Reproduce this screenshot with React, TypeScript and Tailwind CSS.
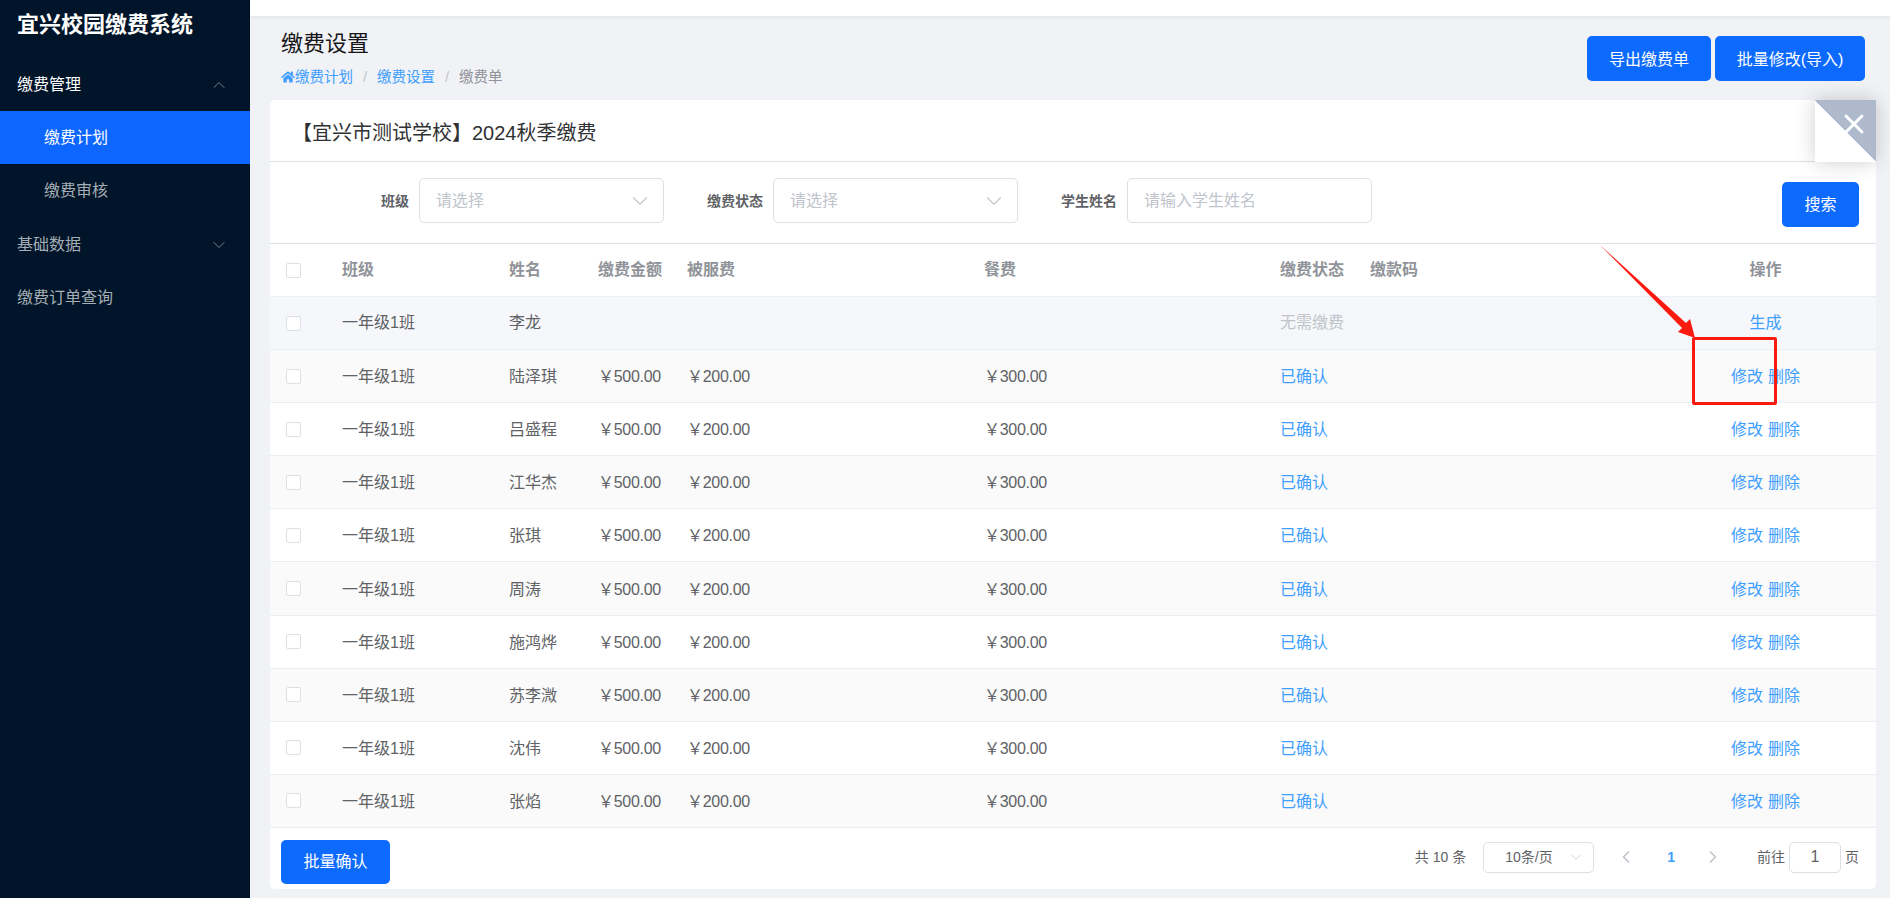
import { ChevronDown, ChevronLeft, ChevronRight, ChevronUp, X } from "lucide-react";
import { FaHome } from "react-icons/fa";

const COLS = "grid grid-cols-[60px_167px_89px_89px_297px_296px_90px_297px_221px] items-center";
const NAMES = ["陆泽琪", "吕盛程", "江华杰", "张琪", "周涛", "施鸿烨", "苏李溦", "沈伟", "张焰"];

function Checkbox({ className = "" }: { className?: string }) {
  return <span className={`ml-4 block h-[15px] w-[15px] rounded-[2px] border border-[#dcdfe6] bg-white ${className}`} />;
}

function Row({ name, striped }: { name: string; striped: boolean }) {
  return (
    <div className={`${COLS} h-[53.1px] border-b border-[#ebeef5] pt-[2px] text-[#606266] ${striped ? "bg-[#fafafa]" : "bg-white"}`}>
      <Checkbox className="-mt-[2px]" />
      <span className="pl-3">一年级1班</span>
      <span className="pl-3">{name}</span>
      <span className="pl-3 tracking-[-0.3px]">￥500.00</span>
      <span className="pl-3 tracking-[-0.3px]">￥200.00</span>
      <span className="pl-3 tracking-[-0.3px]">￥300.00</span>
      <span className="pl-3 text-[#409eff]">已确认</span>
      <span />
      <span className="flex justify-center gap-[5px] text-[#409eff]">
        <span>修改</span>
        <span>删除</span>
      </span>
    </div>
  );
}

function FilterField({ label, placeholder, select }: { label: string; placeholder: string; select?: boolean }) {
  return (
    <div className="flex items-center">
      <span className="w-[109px] pr-[10px] text-right text-sm font-bold text-[#606266]">{label}</span>
      <div className="flex h-[45px] w-[245px] items-center justify-between rounded-[5px] border border-[#dcdfe6] pl-4 pr-[10px] text-[#c0c4cc]">
        <span>{placeholder}</span>
        {select && <ChevronDown size={26} strokeWidth={1} />}
      </div>
    </div>
  );
}

export default function App() {
  return (
    <div
      className="relative flex h-screen overflow-hidden bg-[#f0f2f5] text-base"
      style={{ fontFamily: '"Liberation Sans", "Noto Sans CJK SC", sans-serif' }}
    >
      <aside className="w-[250px] shrink-0 bg-[#001529] text-base text-[#a6adb4]">
        <div className="flex h-[48px] items-center pl-[17px] text-[22px] font-bold text-white">宜兴校园缴费系统</div>
        <div className="flex h-[63px] items-center justify-between pl-[17px] pr-[21px] pt-[10px] text-white">
          <span>缴费管理</span>
          <ChevronUp size={20} strokeWidth={1} className="text-[#8c96a0]" />
        </div>
        <div className="flex h-[53px] items-center bg-[#0d66ff] pl-[44px] text-white">缴费计划</div>
        <div className="flex h-[53px] items-center pl-[44px]">缴费审核</div>
        <div className="flex h-[53px] items-center justify-between pl-[17px] pr-[21px] pt-[2px]">
          <span>基础数据</span>
          <ChevronDown size={20} strokeWidth={1} className="text-[#8c96a0]" />
        </div>
        <div className="flex h-[53px] items-center pl-[17px] pt-[2px]">缴费订单查询</div>
      </aside>

      <main className="min-w-0 flex-1">
        <div className="h-4 bg-white shadow-[0_1px_4px_rgba(0,21,41,0.08)]" />

        <div className="flex h-[84px] justify-between pl-[31px] pr-[25px]">
          <div className="pt-[13px]">
            <h1 className="text-[22px] leading-[30px] text-[#17171a]">缴费设置</h1>
            <div className="mt-[8px] flex items-center text-[14.5px] leading-5 text-[#409eff]">
              <FaHome size={14} />
              <span>缴费计划</span>
              <span className="px-[10px] text-[#c0c4cc]">/</span>
              <span>缴费设置</span>
              <span className="px-[10px] text-[#c0c4cc]">/</span>
              <span className="text-[#909399]">缴费单</span>
            </div>
          </div>
          <div className="flex gap-1 pt-5">
            <button className="h-[45px] w-[124px] rounded-[5px] bg-[#0d6aff] pt-[2px] text-white">导出缴费单</button>
            <button className="h-[45px] w-[150px] rounded-[5px] bg-[#0d6aff] pt-[2px] text-white">批量修改(导入)</button>
          </div>
        </div>

        <section className="relative ml-5 mr-[14px] rounded-[5px] bg-white">
          <div className="flex h-[62px] items-center border-b border-[#dcdfe6] pl-[22px] pt-1 text-xl text-[#303133]">
            【宜兴市测试学校】2024秋季缴费
          </div>
          <div className="absolute right-0 top-0 flex h-[62px] w-[61px] items-start justify-end bg-[linear-gradient(45deg,#ffffff_50%,#aeb9cc_50%)] text-white shadow-[0_0_20px_rgba(0,0,0,0.2)]">
            <X size={32} strokeWidth={2.2} className="mr-[6px] mt-2" />
          </div>

          <div className="flex h-[82px] items-start border-b border-[#dcdfe6] pl-10 pr-[17px] pt-4">
            <FilterField label="班级" placeholder="请选择" select />
            <FilterField label="缴费状态" placeholder="请选择" select />
            <FilterField label="学生姓名" placeholder="请输入学生姓名" />
            <button className="ml-auto mt-1 h-[45px] w-[77px] rounded-[5px] bg-[#0d6aff] text-white">搜索</button>
          </div>

          <div className={`${COLS} h-[53px] border-b border-[#ebeef5] font-bold text-[#909399]`}>
            <Checkbox />
            <span className="pl-3">班级</span>
            <span className="pl-3">姓名</span>
            <span className="pl-3">缴费金额</span>
            <span className="pl-3">被服费</span>
            <span className="pl-3">餐费</span>
            <span className="pl-3">缴费状态</span>
            <span className="pl-3">缴款码</span>
            <span className="text-center">操作</span>
          </div>

          <div className={`${COLS} h-[53.1px] border-b border-[#ebeef5] bg-[#f5f7fa] text-[#606266]`}>
            <Checkbox />
            <span className="pl-3">一年级1班</span>
            <span className="pl-3">李龙</span>
            <span />
            <span />
            <span />
            <span className="pl-3 text-[#c0c4cc]">无需缴费</span>
            <span />
            <span className="text-center text-[#409eff]">生成</span>
          </div>
          {NAMES.map((name, i) => (
            <Row key={name} name={name} striped={i % 2 === 0} />
          ))}

          <div className="flex h-[61px] items-start justify-between pl-[11px] pr-[17px] pt-3">
            <button className="h-11 w-[109px] rounded-[5px] bg-[#0d6aff] text-white">批量确认</button>
            <div className="mt-[2px] flex h-[31px] items-center text-sm text-[#606266]">
              <span>共 10 条</span>
              <div className="ml-[17px] flex h-[31px] w-[111px] items-center justify-between rounded-[5px] border border-[#dcdfe6] pl-[21px] pr-2">
                <span>10条/页</span>
                <ChevronDown size={18} strokeWidth={1} className="text-[#c0c4cc]" />
              </div>
              <ChevronLeft size={20} strokeWidth={2} className="ml-[22px] text-[#c0c4cc]" />
              <span className="ml-[31px] mr-[28px] font-bold text-[#409eff]">1</span>
              <ChevronRight size={20} strokeWidth={2} className="text-[#c0c4cc]" />
              <span className="ml-[34px]">前往</span>
              <span className="mx-1 flex h-[31px] w-[52px] items-center justify-center rounded-[5px] border border-[#dcdfe6] text-base">1</span>
              <span>页</span>
            </div>
          </div>
        </section>
      </main>

      {/* annotation drawn over the screenshot */}
      <div className="absolute left-[1692px] top-[337px] h-[68px] w-[85px] rounded-[2px] border-[3px] border-[#fb1a10]" />
      <svg className="absolute left-[1590px] top-[240px]" width="120" height="105" viewBox="0 0 120 105">
        <polygon points="10,5 96,83 100,79 105,98 88,92 92,88" fill="#fb1a10" />
      </svg>
    </div>
  );
}
